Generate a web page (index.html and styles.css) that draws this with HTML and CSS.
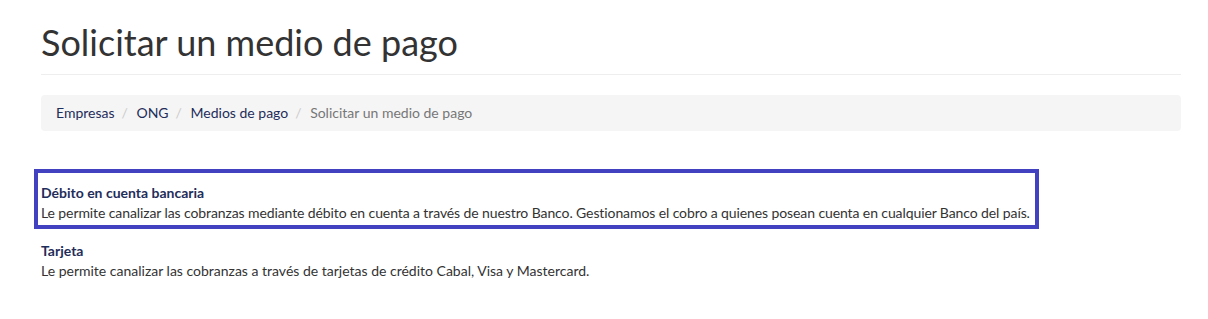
FILE: index.html
```html
<!DOCTYPE html>
<html lang="es">
<head>
<meta charset="utf-8">
<title>Solicitar un medio de pago</title>
<link rel="stylesheet" href="styles.css">
</head>
<body>
<div class="container">
  <div class="page-header">
    <h1>Solicitar un medio de pago</h1>
  </div>
  <ol class="breadcrumb">
    <li><a href="#">Empresas</a></li>
    <li><a href="#">ONG</a></li>
    <li><a href="#">Medios de pago</a></li>
    <li class="active">Solicitar un medio de pago</li>
  </ol>
  <div class="options">
    <a class="option selected" href="#">
      <span class="option-title">Débito en cuenta bancaria</span>
      <span class="option-desc">Le permite canalizar las cobranzas mediante débito en cuenta a través de nuestro Banco. Gestionamos el cobro a quienes posean cuenta en cualquier Banco del país.</span>
    </a>
    <a class="option" href="#">
      <span class="option-title">Tarjeta</span>
      <span class="option-desc">Le permite canalizar las cobranzas a través de tarjetas de crédito Cabal, Visa y Mastercard.</span>
    </a>
  </div>
</div>
</body>
</html>
```

FILE: styles.css
```css
* { box-sizing: border-box; }
html, body { margin: 0; padding: 0; background: #fff; }
body {
  font-family: Lato, "Open Sans", Arial, sans-serif;
  font-size: 14px;
  line-height: 20px;
  color: #333;
}
.container {
  width: 1140px;
  margin-left: 41px;
}
.page-header {
  margin: 0 0 20px;
  padding-top: 23px;
  padding-bottom: 11px;
  border-bottom: 1px solid #eee;
}
.page-header h1 {
  margin: 0;
  font-size: 36px;
  line-height: 39.6px;
  font-weight: 400;
  color: #333;
}
.breadcrumb {
  list-style: none;
  margin: 0 0 38px;
  padding: 8px 15px;
  background: #f5f5f5;
  border-radius: 4px;
  display: flex;
}
.breadcrumb li + li::before {
  content: "/\00a0";
  padding: 0 5px 0 7px;
  color: #ccc;
}
.breadcrumb a { color: #1f2d5a; text-decoration: none; }
.breadcrumb .active { color: #777; }
.options { display: flex; flex-direction: column; gap: 12px; }
.option {
  display: block;
  text-decoration: none;
  color: #333;
}
.option.selected {
  width: 1005px;
  margin-left: -7px;
  border: 4px solid #4242c0;
  padding: 10px 0 2px 3px;
}
.option.selected .option-desc {
  white-space: nowrap;
  letter-spacing: -0.1px;
}
.option-title {
  display: block;
  font-weight: 700;
  color: #1f2d5a;
}
.option-desc { display: block; color: #333; }
```
